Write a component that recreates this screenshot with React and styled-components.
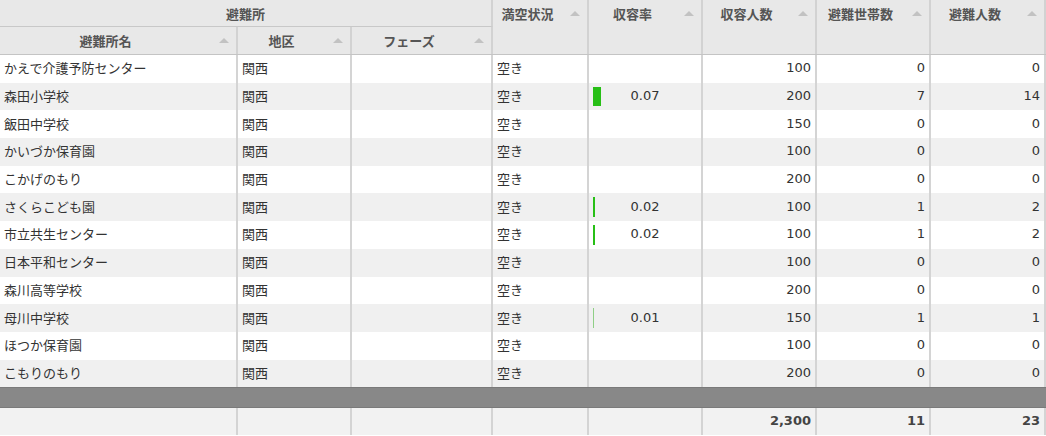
import React from "react";
import styled, { createGlobalStyle } from "styled-components";

const GlobalStyle = createGlobalStyle`
  html, body {
    margin: 0;
    padding: 0;
    background: #ffffff;
  }
  body {
    font-family: "DejaVu Sans", "Noto Sans CJK JP", sans-serif;
    font-size: 13px;
    color: #333;
  }
`;

const COLS = "238px 114px 141px 96px 114px 114px 114px 115px";

const Grid = styled.div`
  width: 1046px;
  height: 436px;
  overflow: hidden;
  display: flex;
  flex-direction: column;
`;

const Header = styled.div`
  display: grid;
  grid-template-columns: ${COLS};
  grid-template-rows: 27px 27px;
  background: #e8e8e8;
  border-bottom: 1px solid #c4c4c4;
`;

const HeadCell = styled.div`
  grid-column: ${(p) => p.$col};
  grid-row: ${(p) => p.$row};
  border-right: 2px solid #d2d2d2;
  border-bottom: ${(p) => (p.$group ? "1px solid #c8c8c8" : "none")};
  box-sizing: border-box;
  color: #555;
  font-weight: bold;
  font-size: 13px;
`;

const HeadInner = styled.div`
  height: 26px;
  display: flex;
  align-items: center;
`;

const HeadLabel = styled.span`
  flex: 1;
  text-align: center;
  white-space: nowrap;
`;

const SortArrow = styled.span`
  width: 0;
  height: 0;
  margin: 0 7px 0 8px;
  border-left: 5px solid transparent;
  border-right: 5px solid transparent;
  border-bottom: 5px solid #c2c2c2;
`;

const Body = styled.div`
  display: flex;
  flex-direction: column;
`;

const Row = styled.div`
  display: grid;
  grid-template-columns: ${COLS};
  height: 27.7px;
  background: ${(p) => (p.$alt ? "#f0f0f0" : "#ffffff")};
`;

const Cell = styled.div`
  position: relative;
  box-sizing: border-box;
  border-right: 2px solid #d4d4d4;
  padding: 0 4px 2px;
  display: flex;
  align-items: center;
  justify-content: ${(p) =>
    p.$align === "right" ? "flex-end" : p.$align === "center" ? "center" : "flex-start"};
  white-space: nowrap;
  overflow: hidden;
  font-weight: ${(p) => (p.$bold ? "bold" : "normal")};
  color: ${(p) => (p.$bold ? "#444" : "#333")};
`;

const RateBar = styled.span`
  position: absolute;
  left: 4px;
  top: 4px;
  bottom: 4px;
  background: ${(p) => (p.$faint ? "#8fcf86" : "#27bf16")};
`;

const Band = styled.div`
  height: 19px;
  background: #888888;
  border-top: 1px solid #7a7a7a;
  border-bottom: 1px solid #7a7a7a;
`;

const Footer = styled(Row)`
  background: #f2f2f2;
  height: 27px;
`;

const rows = [
  ["かえで介護予防センター", 100, 0, 0],
  ["森田小学校", 200, 7, 14],
  ["飯田中学校", 150, 0, 0],
  ["かいづか保育園", 100, 0, 0],
  ["こかげのもり", 200, 0, 0],
  ["さくらこども園", 100, 1, 2],
  ["市立共生センター", 100, 1, 2],
  ["日本平和センター", 100, 0, 0],
  ["森川高等学校", 200, 0, 0],
  ["母川中学校", 150, 1, 1],
  ["ほつか保育園", 100, 0, 0],
  ["こもりのもり", 200, 0, 0],
];

const totals = { capacity: 2300, households: 11, people: 23 };

const HeadTitle = ({ label, arrow = true }) => (
  <HeadInner>
    <HeadLabel>{label}</HeadLabel>
    {arrow && <SortArrow />}
  </HeadInner>
);

const App = () => (
  <>
    <GlobalStyle />
    <Grid>
      <Header>
        <HeadCell $col="1 / 4" $row="1" $group>
          <HeadInner>
            <HeadLabel>避難所</HeadLabel>
          </HeadInner>
        </HeadCell>
        <HeadCell $col="1" $row="2">
          <HeadTitle label="避難所名" />
        </HeadCell>
        <HeadCell $col="2" $row="2">
          <HeadTitle label="地区" />
        </HeadCell>
        <HeadCell $col="3" $row="2">
          <HeadTitle label="フェーズ" />
        </HeadCell>
        <HeadCell $col="4" $row="1 / 3">
          <HeadTitle label="満空状況" />
        </HeadCell>
        <HeadCell $col="5" $row="1 / 3">
          <HeadTitle label="収容率" />
        </HeadCell>
        <HeadCell $col="6" $row="1 / 3">
          <HeadTitle label="収容人数" />
        </HeadCell>
        <HeadCell $col="7" $row="1 / 3">
          <HeadTitle label="避難世帯数" />
        </HeadCell>
        <HeadCell $col="8" $row="1 / 3">
          <HeadTitle label="避難人数" />
        </HeadCell>
      </Header>

      <Body>
        {rows.map(([name, cap, households, people], i) => {
          const rate = people / cap;
          return (
            <Row key={name} $alt={i % 2 === 1}>
              <Cell>{name}</Cell>
              <Cell>関西</Cell>
              <Cell />
              <Cell>空き</Cell>
              <Cell $align="center">
                {rate > 0 && (
                  <>
                    <RateBar
                      $faint={rate < 0.015}
                      style={{ width: `${Math.max(1, rate * 114)}px` }}
                    />
                    {rate.toFixed(2)}
                  </>
                )}
              </Cell>
              <Cell $align="right">{cap}</Cell>
              <Cell $align="right">{households}</Cell>
              <Cell $align="right">{people}</Cell>
            </Row>
          );
        })}
      </Body>

      <Band />

      <Footer>
        <Cell />
        <Cell />
        <Cell />
        <Cell />
        <Cell />
        <Cell $align="right" $bold>
          {totals.capacity.toLocaleString("en-US")}
        </Cell>
        <Cell $align="right" $bold>
          {totals.households}
        </Cell>
        <Cell $align="right" $bold>
          {totals.people}
        </Cell>
      </Footer>
    </Grid>
  </>
);

export default App;
